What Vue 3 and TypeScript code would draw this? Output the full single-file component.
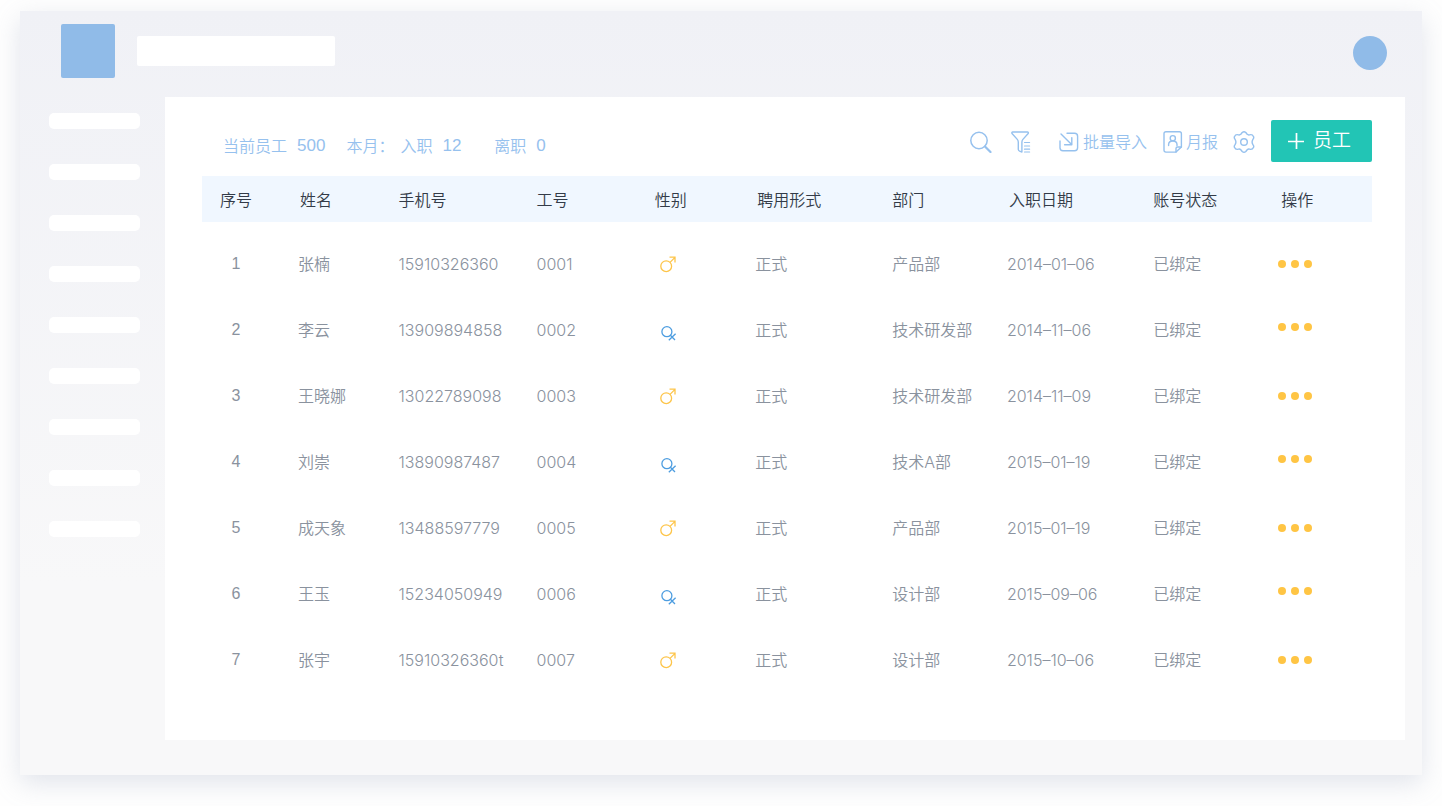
<script setup lang="ts">
interface Employee {
  id: number
  name: string
  phone: string
  code: string
  gender: 'male' | 'female'
  type: string
  dept: string
  date: string
  status: string
}

const columns: string[] = ['序号', '姓名', '手机号', '工号', '性别', '聘用形式', '部门', '入职日期', '账号状态', '操作']

const employees: Employee[] = [
  { id: 1, name: '张楠', phone: '15910326360', code: '0001', gender: 'male', type: '正式', dept: '产品部', date: '2014–01–06', status: '已绑定' },
  { id: 2, name: '李云', phone: '13909894858', code: '0002', gender: 'female', type: '正式', dept: '技术研发部', date: '2014–11–06', status: '已绑定' },
  { id: 3, name: '王晓娜', phone: '13022789098', code: '0003', gender: 'male', type: '正式', dept: '技术研发部', date: '2014–11–09', status: '已绑定' },
  { id: 4, name: '刘崇', phone: '13890987487', code: '0004', gender: 'female', type: '正式', dept: '技术A部', date: '2015–01–19', status: '已绑定' },
  { id: 5, name: '成天象', phone: '13488597779', code: '0005', gender: 'male', type: '正式', dept: '产品部', date: '2015–01–19', status: '已绑定' },
  { id: 6, name: '王玉', phone: '15234050949', code: '0006', gender: 'female', type: '正式', dept: '设计部', date: '2015–09–06', status: '已绑定' },
  { id: 7, name: '张宇', phone: '15910326360t', code: '0007', gender: 'male', type: '正式', dept: '设计部', date: '2015–10–06', status: '已绑定' },
]

const menuCount = 9
</script>

<template>
  <div class="window">
    <header class="topbar">
      <div class="logo"></div>
      <input class="search-box" type="text" aria-label="搜索" />
      <button class="avatar" type="button" aria-label="账号"></button>
    </header>

    <div class="body">
      <nav class="sidebar">
        <a v-for="n in menuCount" :key="n" class="menu-item" href="#" :aria-label="`菜单 ${n}`"></a>
      </nav>

      <main class="panel">
        <div class="toolbar">
          <div class="stats">
            <span class="stat">当前员工 <b>500</b></span>
            <span class="month">本月：</span>
            <span class="stat joined">入职 <b>12</b></span>
            <span class="stat left">离职 <b>0</b></span>
          </div>

          <div class="actions">
            <button class="tool search" type="button" aria-label="搜索">
              <svg width="22" height="22" viewBox="0 0 22 22" fill="none" stroke="currentColor">
                <circle cx="9" cy="9.5" r="8.2" stroke-width="1.5" />
                <path d="M15 15.5L20.5 21" stroke-width="2.2" stroke-linecap="round" />
              </svg>
            </button>
            <button class="tool filter" type="button" aria-label="筛选">
              <svg width="20" height="22" viewBox="0 0 20 22" fill="none" stroke="currentColor" stroke-width="1.4" stroke-linecap="round" stroke-linejoin="round">
                <path d="M7.3 18.6V11.2Q7.3 9.6 6.3 8.4L1 2.5Q0.4 1.2 1.8 1H16.4Q17.8 1.2 17.2 2.5L11.9 8.4Q10.9 9.6 10.9 11.2V21L8.6 20.2Q7.3 19.7 7.3 18.6" />
                <path d="M13.5 11.5H18.6M13.5 15H18.6M13.5 18.2H18.6M13.5 21H18.6" stroke-width="1.2" />
              </svg>
            </button>
            <button class="tool import" type="button">
              <svg width="20" height="20" viewBox="0 0 20 20" fill="none" stroke="currentColor" stroke-width="1.4" stroke-linecap="round" stroke-linejoin="round">
                <path d="M8 1.2H15.5Q18.6 1.2 18.6 4.2V15.8Q18.6 18.8 15.5 18.8H4Q1 18.8 1 15.8V9" />
                <path d="M2 2L12.6 12.6M12.8 5.6V12.8H5.6" />
              </svg>
              <span>批量导入</span>
            </button>
            <button class="tool report" type="button">
              <svg width="20" height="22" viewBox="0 0 20 22" fill="none" stroke="currentColor" stroke-width="1.4" stroke-linecap="round" stroke-linejoin="round">
                <path d="M13 21.1H3Q1 21.1 1 19V2.8Q1 0.8 3 0.8H16.4Q18.4 0.8 18.4 2.8V16Z" />
                <path d="M13 21.1V17.5Q13 16 14.5 16H18.4" />
                <circle cx="9.8" cy="7.2" r="2.6" />
                <path d="M5.6 14.6V13.4Q5.8 10 9.8 10Q13.8 10 14 13.4V14.6" />
              </svg>
              <span>月报</span>
            </button>
            <button class="tool settings" type="button" aria-label="设置">
              <svg width="22" height="22" viewBox="0 0 22 22" fill="none" stroke="currentColor" stroke-width="1.4" stroke-linejoin="round">
                <path d="M9.2 1.5Q11 0 12.8 1.5L14.2 3.3Q15.2 4.2 16.6 3.8Q19.4 3 20.4 5.4Q21.3 7 19.8 8.6Q18.4 11 19.8 13.4Q21.3 15 20.4 16.6Q19.4 19 16.6 18.2Q15.2 17.8 14.2 18.7L12.8 20.5Q11 22 9.2 20.5L7.8 18.7Q6.8 17.8 5.4 18.2Q2.6 19 1.6 16.6Q0.7 15 2.2 13.4Q3.6 11 2.2 8.6Q0.7 7 1.6 5.4Q2.6 3 5.4 3.8Q6.8 4.2 7.8 3.3Z" />
                <circle cx="11" cy="11" r="3.3" />
              </svg>
            </button>
            <button class="add" type="button">
              <svg width="16" height="16" viewBox="0 0 16 16" fill="none" stroke="currentColor" stroke-width="1.7">
                <path d="M0 8.5H16M8.5 0V16" />
              </svg>
              <span>员工</span>
            </button>
          </div>
        </div>

        <table class="grid">
          <thead>
            <tr>
              <th v-for="c in columns" :key="c" scope="col">{{ c }}</th>
            </tr>
          </thead>
          <tbody>
            <tr v-for="e in employees" :key="e.id" :class="e.gender">
              <td>{{ e.id }}</td>
              <td>{{ e.name }}</td>
              <td>{{ e.phone }}</td>
              <td>{{ e.code }}</td>
              <td class="gender">
                <svg v-if="e.gender === 'male'" width="18" height="18" viewBox="0 0 18 18" fill="none" stroke="currentColor" stroke-width="1.3" role="img" aria-label="男">
                  <circle cx="6.2" cy="11.2" r="5.4" />
                  <path d="M10 7.4L15 2.4M9.5 2.2H15V7.6" />
                </svg>
                <svg v-else width="18" height="18" viewBox="0 0 18 18" fill="none" stroke="currentColor" stroke-width="1.3" role="img" aria-label="女">
                  <circle cx="6.9" cy="6.7" r="5" />
                  <path d="M10.4 10.2L15 15M15.6 8.8L8.8 15.2" />
                </svg>
              </td>
              <td>{{ e.type }}</td>
              <td>{{ e.dept }}</td>
              <td>{{ e.date }}</td>
              <td>{{ e.status }}</td>
              <td class="ops">
                <button class="more" type="button" :aria-label="`操作 ${e.name}`"><i></i><i></i><i></i></button>
              </td>
            </tr>
          </tbody>
        </table>
      </main>
    </div>
  </div>
</template>

<style>
body {
  margin: 0;
  background: #fefefe;
}
</style>

<style scoped>
* {
  box-sizing: border-box;
}

button {
  padding: 0;
  border: 0;
  background: none;
  font: inherit;
  color: inherit;
  cursor: pointer;
}

svg {
  display: block;
  flex: none;
}

.window {
  display: flex;
  flex-direction: column;
  min-height: calc(100vh - 42px);
  margin: 11px 20px 31px;
  background: linear-gradient(#f0f1f6, #f8f8f9 75%);
  box-shadow: 0 8px 24px rgba(150, 160, 185, 0.28);
  font-family: Inter, "Noto Sans CJK SC", sans-serif;
  font-size: 16px;
  line-height: 24px;
  font-weight: 350;
}

.topbar {
  display: flex;
  align-items: center;
  height: 86px;
  padding: 0 35px 6px 41px;
}

.logo {
  width: 54px;
  height: 54px;
  border-radius: 2px;
  background: #90bbe8;
}

.search-box {
  width: 198px;
  height: 30px;
  margin-left: 22px;
  padding: 0 8px;
  border: 0;
  border-radius: 2px;
  background: #fff;
}

.avatar {
  width: 34px;
  height: 34px;
  margin: 4px 0 0 auto;
  border-radius: 50%;
  background: #90bbe8;
}

.body {
  display: flex;
  flex: 1;
  padding: 0 17px 35px 0;
}

.sidebar {
  display: flex;
  flex: none;
  flex-direction: column;
  gap: 35px;
  width: 145px;
  padding: 16px 25px 0 29px;
}

.menu-item {
  height: 16px;
  border-radius: 5px;
  background: #fff;
}

.panel {
  flex: 1;
  min-width: 0;
  padding: 23px 33px 0 37px;
  background: #fff;
}

.toolbar {
  display: flex;
  align-items: center;
  justify-content: space-between;
  margin-bottom: 14px;
  color: #96c1ee;
}

.stats {
  display: flex;
  padding: 10px 0 0 21px;
}

.stat {
  display: flex;
  gap: 10px;
}

.stat b {
  font-family: "Liberation Sans", Arial, sans-serif;
  font-size: 17px;
  font-weight: 400;
}

.month {
  margin: 0 6px 0 21px;
}

.left {
  margin-left: 33px;
}

.actions {
  display: flex;
  align-items: center;
}

.tool {
  display: flex;
  align-items: center;
  gap: 4px;
  padding-top: 2px;
}

.filter {
  margin-left: 19px;
}

.import {
  margin-left: 28px;
}

.report {
  gap: 3px;
  margin-left: 16px;
}

.settings {
  margin-left: 15px;
}

.add {
  display: flex;
  align-items: center;
  gap: 9px;
  width: 101px;
  height: 42px;
  margin-left: 16px;
  padding-left: 17px;
  border-radius: 2px;
  background: #22c5b5;
  color: #fff;
  font-size: 19px;
}

.grid {
  width: 100%;
  border-collapse: collapse;
  table-layout: fixed;
  color: #8a929e;
}

.grid th,
.grid td {
  padding: 0;
  text-align: left;
  font-weight: 350;
  white-space: nowrap;
}

.grid th {
  height: 46px;
  padding-top: 2px;
  background: #f0f7ff;
  color: #333b48;
}

.grid td {
  height: 66px;
}

.grid tbody::before {
  content: "";
  display: block;
  height: 9px;
}

.grid th:nth-child(1) { width: 8.2%; }
.grid th:nth-child(2) { width: 8.6%; padding-left: 2px; }
.grid th:nth-child(3) { width: 11.8%; }
.grid th:nth-child(4) { width: 10.1%; }
.grid th:nth-child(5) { width: 8.6%; }
.grid th:nth-child(6) { width: 11.7%; padding-left: 2px; }
.grid th:nth-child(7) { width: 9.8%; }
.grid th:nth-child(8) { width: 12.5%; padding-left: 2px; }
.grid th:nth-child(9) { width: 10.7%; }
.grid th:nth-child(10) { width: 8%; padding-left: 3px; }

.grid th:first-child,
.grid td:first-child {
  padding-right: 28px;
  text-align: center;
}

.grid td:first-child {
  font-family: "Liberation Sans", Arial, sans-serif;
}

.grid .gender {
  padding-left: 5px;
  color: #fdc54a;
}

.grid .female .gender {
  padding-top: 8px;
  color: #4d9de0;
}

.more {
  display: flex;
  gap: 5px;
}

.more i {
  width: 8px;
  height: 8px;
  border-radius: 50%;
  background: #ffc544;
}

.grid .female .ops {
  padding-bottom: 6px;
}
</style>
